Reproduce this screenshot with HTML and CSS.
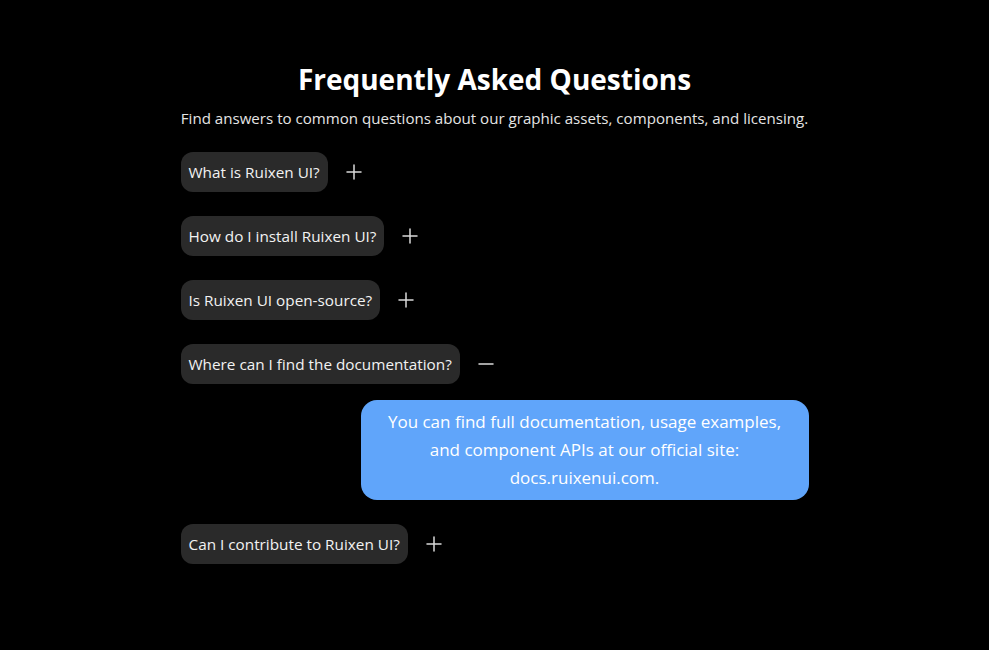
FILE: index.html
```html
<!DOCTYPE html>
<html lang="en">
<head>
    <meta charset="UTF-8">
    <meta name="viewport" content="width=device-width, initial-scale=1.0">
    <title>FAQ</title>
    <link rel="stylesheet" href="styles.css">
</head>
<body>
    <div class="faq">
        <h1>Frequently Asked Questions</h1>
        <p class="subtitle">Find answers to common questions about our graphic assets, components, and licensing.</p>

        <div class="faq-list">
            <div class="faq-item">
                <button class="question">
                    <span class="q-text">What is Ruixen UI?</span>
                    <svg class="toggle" viewBox="0 0 24 24"><path d="M5 12h14M12 5v14"/></svg>
                </button>
            </div>

            <div class="faq-item">
                <button class="question">
                    <span class="q-text">How do I install Ruixen UI?</span>
                    <svg class="toggle" viewBox="0 0 24 24"><path d="M5 12h14M12 5v14"/></svg>
                </button>
            </div>

            <div class="faq-item">
                <button class="question">
                    <span class="q-text">Is Ruixen UI open-source?</span>
                    <svg class="toggle" viewBox="0 0 24 24"><path d="M5 12h14M12 5v14"/></svg>
                </button>
            </div>

            <div class="faq-item open">
                <button class="question">
                    <span class="q-text">Where can I find the documentation?</span>
                    <svg class="toggle" viewBox="0 0 24 24"><path d="M5 12h14"/></svg>
                </button>
                <div class="answer">You can find full documentation, usage examples, and component APIs at our official site: docs.ruixenui.com.</div>
            </div>

            <div class="faq-item">
                <button class="question">
                    <span class="q-text">Can I contribute to Ruixen UI?</span>
                    <svg class="toggle" viewBox="0 0 24 24"><path d="M5 12h14M12 5v14"/></svg>
                </button>
            </div>
        </div>
    </div>
</body>
</html>
```

FILE: styles.css
```css
body {
    margin: 0;
    background: #000000;
    color: #ffffff;
    font-family: 'Open Sans', sans-serif;
}

.faq {
    width: 628px;
    margin: 0 auto;
    padding-top: 61px;
}

h1 {
    margin: 0 0 9px;
    text-align: center;
    font-size: 28px;
    line-height: 36px;
    font-weight: 700;
}

.subtitle {
    margin: 0 0 22px;
    text-align: center;
    font-size: 15.1px;
    line-height: 24px;
    color: #e5e5e5;
}

.faq-list {
    display: flex;
    flex-direction: column;
    gap: 24px;
}

.faq-item {
    display: flex;
    flex-direction: column;
    gap: 16px;
}

.question {
    display: flex;
    align-items: center;
    gap: 14px;
    padding: 0;
    background: none;
    border: none;
    color: inherit;
    font: inherit;
    cursor: pointer;
    align-self: flex-start;
}

.q-text {
    background: #2a2a2a;
    border-radius: 12px;
    padding: 8px 8px;
    font-size: 15.3px;
    line-height: 24px;
    color: #f2f2f2;
}

.toggle {
    width: 24px;
    height: 24px;
    fill: none;
    stroke: #d9d9d9;
    stroke-width: 1.5;
    stroke-linecap: round;
}

.answer {
    align-self: flex-end;
    max-width: 448px;
    box-sizing: border-box;
    padding: 8px 16px;
    background: #60a5fa;
    border-radius: 16px;
    text-align: center;
    font-size: 17px;
    line-height: 28px;
    color: #ffffff;
}
```
